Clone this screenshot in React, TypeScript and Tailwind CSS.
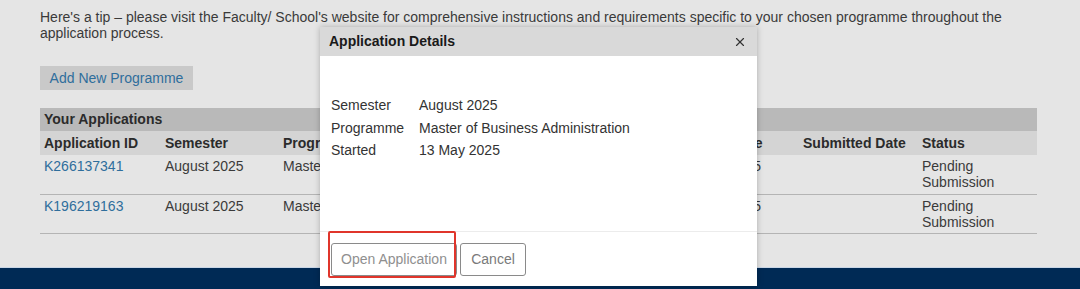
import { X } from "lucide-react";

/* Application list page with the "Application Details" dialog open */

const COLS = [
  { label: "Application ID", w: "w-[121px]" },
  { label: "Semester", w: "w-[118px]" },
  { label: "Programme", w: "w-[397px]" },
  { label: "Started Date", w: "w-[123px]" },
  { label: "Submitted Date", w: "w-[119px]" },
  { label: "Status", w: "w-[119px]" },
];

const ROWS = [
  { id: "K266137341", semester: "August 2025", programme: "Master of Business Administration", started: "13 May 2025" },
  { id: "K196219163", semester: "August 2025", programme: "Master of Business Administration", started: "13 May 2025" },
];

export default function App() {
  return (
    <div className="relative h-[289px] w-[1080px] overflow-hidden bg-[#e5e5e5] font-['Liberation_Sans',Arial,sans-serif] text-[14px] text-[#3a3a3a]">
      {/* Page */}
      <div className="h-[267px] px-10 pt-[9px]">
        <p className="leading-[16px]">
          Here's a tip – please visit the Faculty/ School's website for comprehensive instructions and requirements specific to your chosen programme throughout the application process.
        </p>

        <button className="mt-[25px] block h-6 w-[153px] bg-[#c9c9c9] text-[14px] text-[#2f6e9c]">
          Add New Programme
        </button>

        <table className="mt-[18px] w-[997px] table-fixed border-collapse">
          <colgroup>
            {COLS.map((c) => (
              <col key={c.label} className={c.w} />
            ))}
          </colgroup>
          <thead>
            <tr className="h-[23px] bg-[#b9b9b9]">
              <th colSpan={6} className="px-1 text-left font-bold text-[#2b2b2b]">
                Your Applications
              </th>
            </tr>
            <tr className="h-6 bg-[#d4d4d4]">
              {COLS.map((c) => (
                <th key={c.label} className="px-1 text-left font-bold text-[#2b2b2b]">
                  {c.label}
                </th>
              ))}
            </tr>
          </thead>
          <tbody>
            {ROWS.map((r) => (
              <tr key={r.id} className="h-[39px] border-b border-[#b4b4b4] align-top leading-[16px]">
                <td className="px-1 pt-[3px] text-[#2f6e9c]">{r.id}</td>
                <td className="px-1 pt-[3px]">{r.semester}</td>
                <td className="px-1 pt-[3px]">{r.programme}</td>
                <td className="px-1 pt-[3px]">{r.started}</td>
                <td className="px-1 pt-[3px]"></td>
                <td className="px-1 pt-[3px]">
                  Pending
                  <br />
                  Submission
                </td>
              </tr>
            ))}
          </tbody>
        </table>
      </div>

      {/* Footer */}
      <div className="h-[22px] border-t border-[#c9d6e6] bg-[#002a55]" />

      {/* Dialog */}
      <div className="absolute left-[320px] top-[27px] flex w-[437px] flex-col bg-white shadow-[0_0_6px_rgba(0,0,0,0.25)]">
        <div className="flex h-[29px] items-center justify-between bg-[#d9d9d9] pl-[9px] pr-[10px]">
          <span className="font-bold text-[#1a1a1a]">Application Details</span>
          <X className="h-[14px] w-[14px] text-[#333]" strokeWidth={2} />
        </div>

        <div className="h-[175px] pl-[11px] pt-[38px] leading-[22.5px] text-[#333]">
          <div className="flex">
            <span className="w-[88px]">Semester</span>
            <span>August 2025</span>
          </div>
          <div className="flex">
            <span className="w-[88px]">Programme</span>
            <span>Master of Business Administration</span>
          </div>
          <div className="flex">
            <span className="w-[88px]">Started</span>
            <span>13 May 2025</span>
          </div>
        </div>

        <div className="flex gap-[3px] border-t border-[#ececec] px-[11px] pb-[10px] pt-[11px]">
          <div className="relative">
            <button className="h-[33px] w-[126px] rounded-[3px] border border-[#8a8a8a] text-[14px] text-[#8f8f8f]">
              Open Application
            </button>
            <div className="absolute -left-[3px] -top-[12px] h-[47px] w-[128px] rounded-[2px] border-2 border-[#e0352b]" />
          </div>
          <button className="h-[33px] w-[66px] rounded-[3px] border border-[#8a8a8a] text-[14px] text-[#7a7a7a]">
            Cancel
          </button>
        </div>
      </div>
    </div>
  );
}
